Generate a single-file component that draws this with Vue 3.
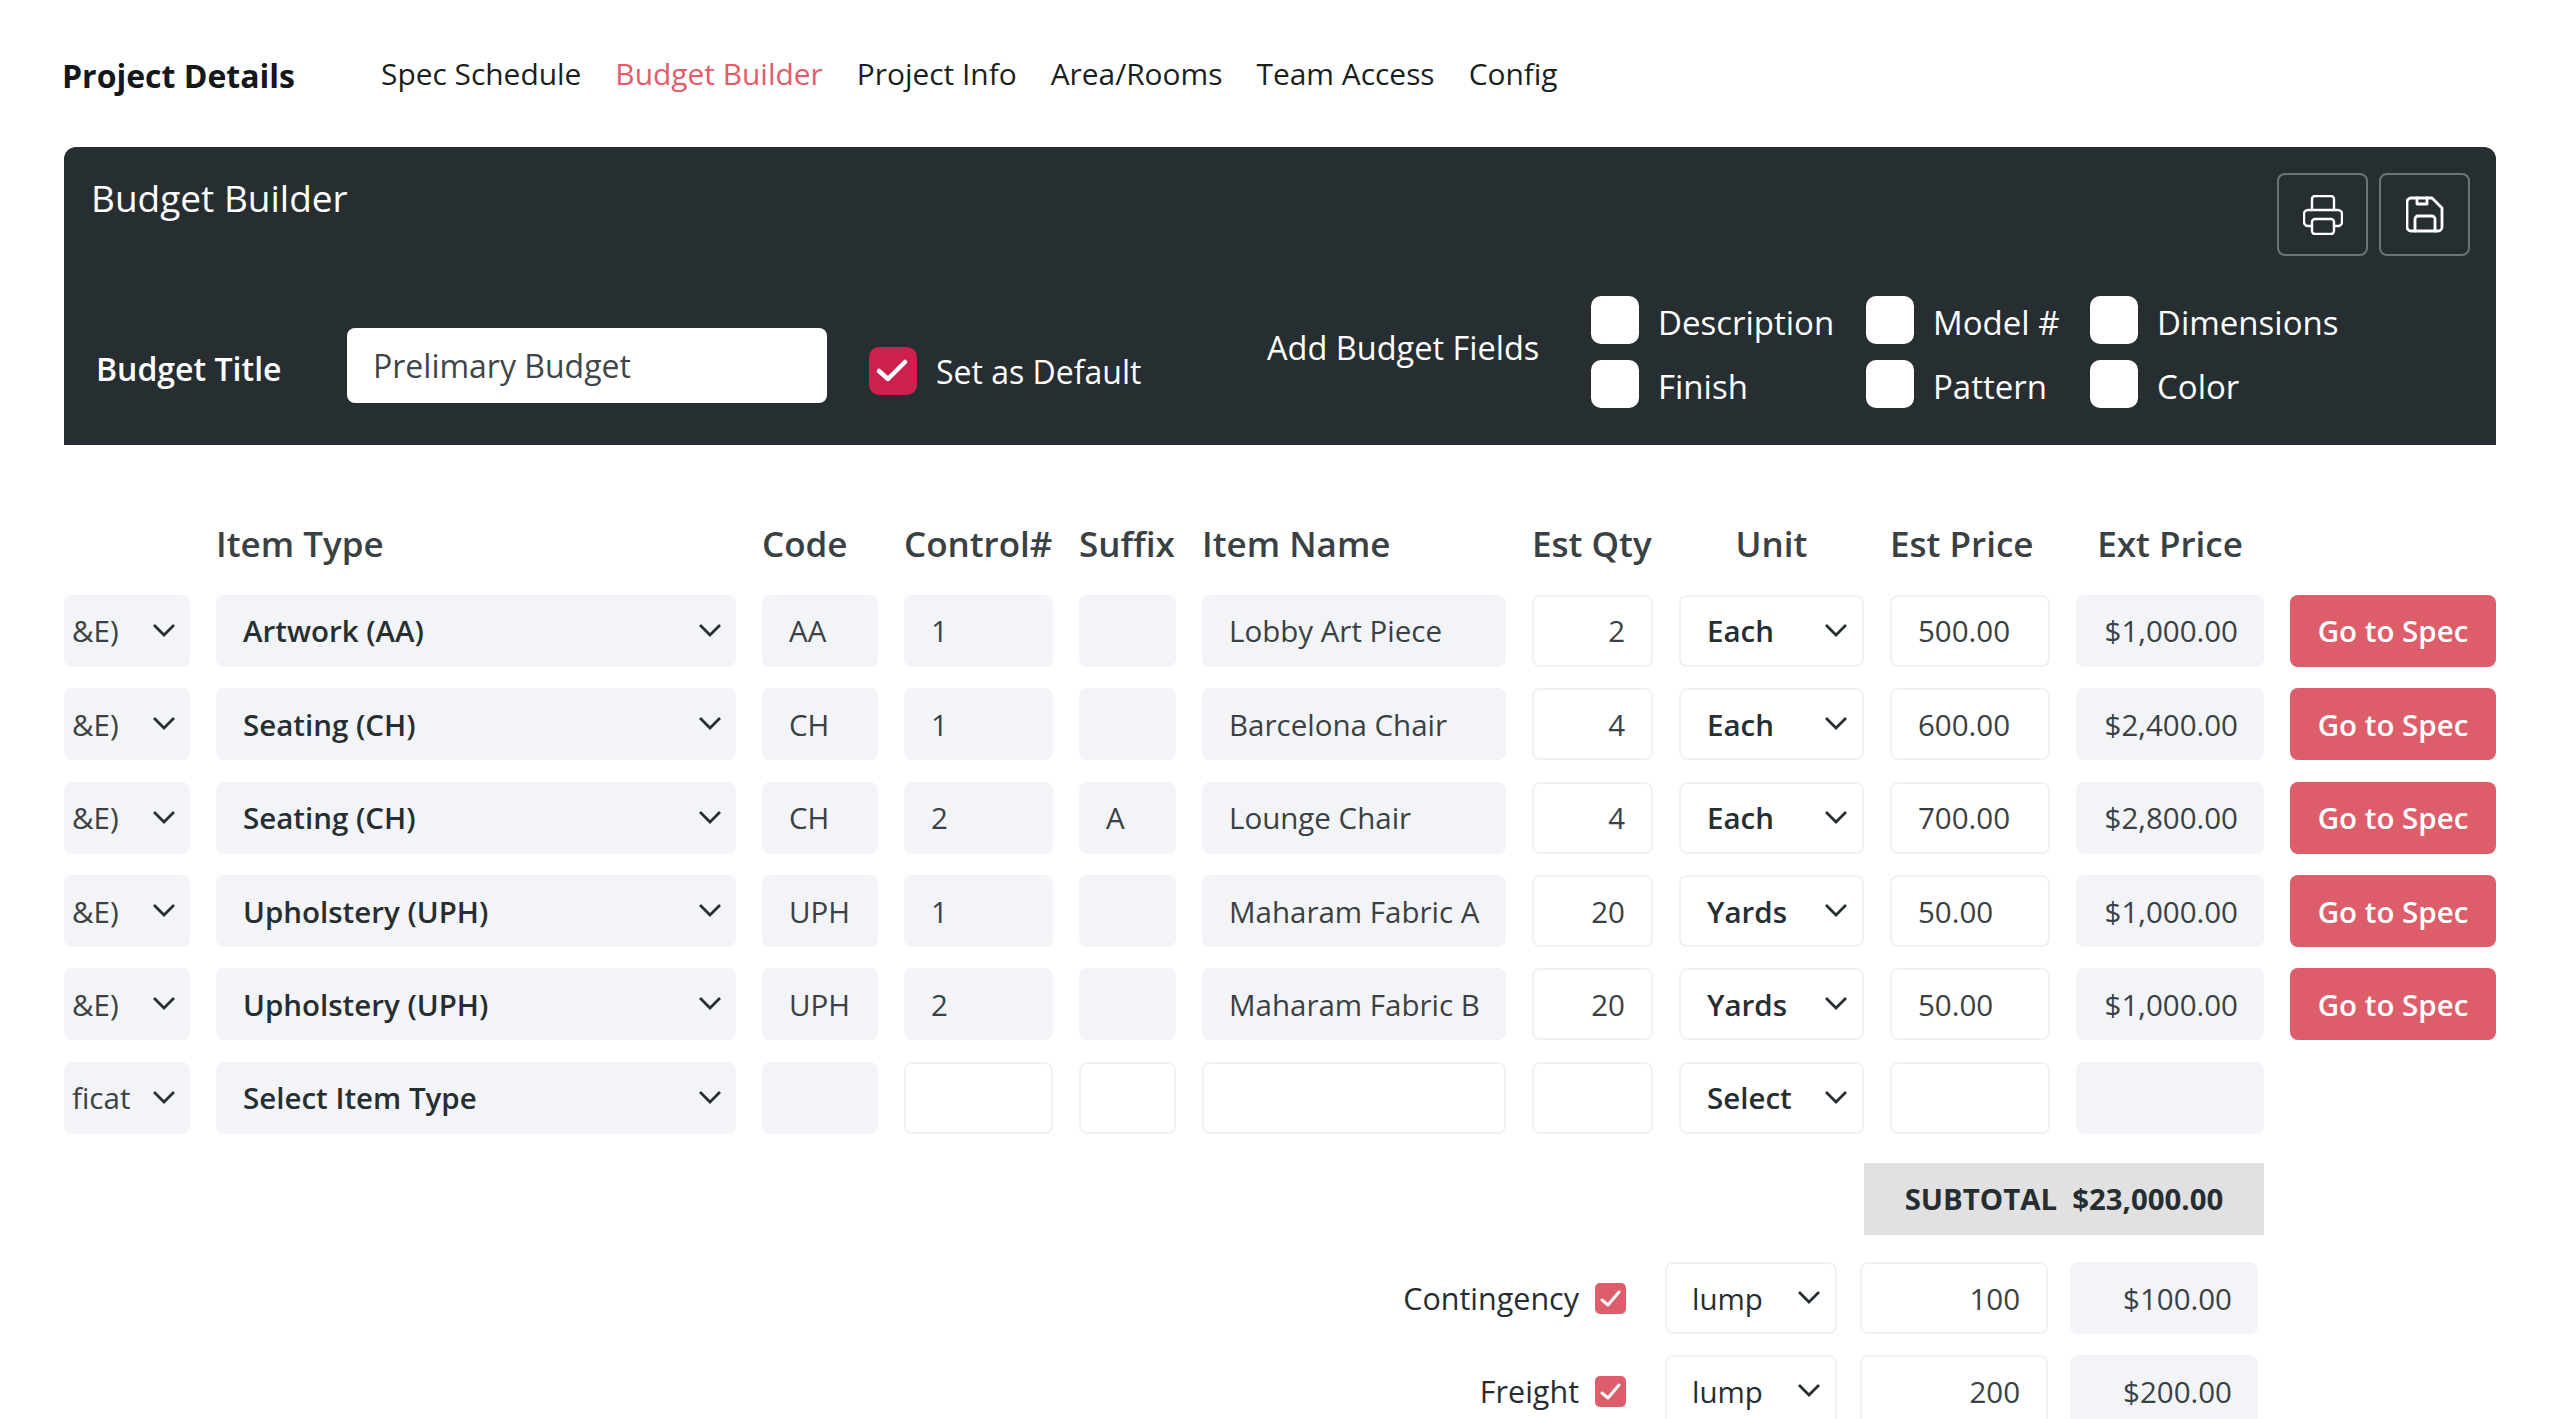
<script setup>
const fieldOptions = ['Description', 'Model #', 'Dimensions', 'Finish', 'Pattern', 'Color']

const rows = [
  { cat: '&E)', type: 'Artwork (AA)', code: 'AA', control: '1', suffix: '', name: 'Lobby Art Piece', qty: '2', unit: 'Each', price: '500.00', ext: '$1,000.00' },
  { cat: '&E)', type: 'Seating (CH)', code: 'CH', control: '1', suffix: '', name: 'Barcelona Chair', qty: '4', unit: 'Each', price: '600.00', ext: '$2,400.00' },
  { cat: '&E)', type: 'Seating (CH)', code: 'CH', control: '2', suffix: 'A', name: 'Lounge Chair', qty: '4', unit: 'Each', price: '700.00', ext: '$2,800.00' },
  { cat: '&E)', type: 'Upholstery (UPH)', code: 'UPH', control: '1', suffix: '', name: 'Maharam Fabric A', qty: '20', unit: 'Yards', price: '50.00', ext: '$1,000.00' },
  { cat: '&E)', type: 'Upholstery (UPH)', code: 'UPH', control: '2', suffix: '', name: 'Maharam Fabric B', qty: '20', unit: 'Yards', price: '50.00', ext: '$1,000.00' }
]

const extras = [
  { label: 'Contingency', amount: '100', total: '$100.00' },
  { label: 'Freight', amount: '200', total: '$200.00' }
]
</script>

<template>
  <div class="page">
    <nav class="topnav">
      <strong class="brand">Project Details</strong>
      <a>Spec Schedule</a>
      <a class="active">Budget Builder</a>
      <a>Project Info</a>
      <a>Area/Rooms</a>
      <a>Team Access</a>
      <a>Config</a>
    </nav>

    <section class="panel">
      <div class="panel-head">
        <h2>Budget Builder</h2>
        <div class="tools">
          <button class="tool">
            <svg width="40" height="40" viewBox="0 0 40 40" fill="none" stroke="currentColor" stroke-width="2.4" stroke-linejoin="round" stroke-linecap="round">
              <path d="M9 31H5a4 4 0 0 1-4-4v-8a4 4 0 0 1 4-4h30a4 4 0 0 1 4 4v8a4 4 0 0 1-4 4h-4" />
              <path d="M9 15V4a3 3 0 0 1 3-3h16a3 3 0 0 1 3 3v11" />
              <rect x="9" y="24" width="22" height="15" rx="3" />
            </svg>
          </button>
          <button class="tool">
            <svg width="38" height="37" viewBox="0 0 38 37" fill="none" stroke="currentColor" stroke-width="2.8" stroke-linejoin="round" stroke-linecap="round">
              <path d="M5 2h21l10 10v19a4 4 0 0 1-4 4H5a4 4 0 0 1-4-4V6a4 4 0 0 1 4-4z" />
              <path d="M11 2v6h10V2" />
              <path d="M9 35V23a3 3 0 0 1 3-3h14a3 3 0 0 1 3 3v12" />
            </svg>
          </button>
        </div>
      </div>
      <div class="panel-form">
        <label class="title-label">Budget Title</label>
        <input class="title-input" value="Prelimary Budget" />
        <span class="check-red">
          <svg width="48" height="48" viewBox="0 0 48 48" fill="none" stroke="#fff" stroke-width="4.5" stroke-linecap="round" stroke-linejoin="round">
            <path d="M10 24l9 8 17-17" />
          </svg>
        </span>
        <span class="default-label">Set as Default</span>
        <span class="add-label">Add Budget Fields</span>
        <div class="fields">
          <label v-for="f in fieldOptions" :key="f" class="field">
            <span class="box"></span>
            <span class="field-text">{{ f }}</span>
          </label>
        </div>
      </div>
    </section>

    <div class="grid head">
      <span></span>
      <span>Item Type</span>
      <span>Code</span>
      <span>Control#</span>
      <span>Suffix</span>
      <span>Item Name</span>
      <span>Est Qty</span>
      <span class="center">Unit</span>
      <span>Est Price</span>
      <span class="center">Ext Price</span>
    </div>

    <div v-for="(r, i) in rows" :key="i" class="grid row">
      <div class="cell select tight">{{ r.cat }}<svg class="chev" viewBox="0 0 24 14"><path d="M2 2l10 10L22 2" /></svg></div>
      <div class="cell select strong">{{ r.type }}<svg class="chev" viewBox="0 0 24 14"><path d="M2 2l10 10L22 2" /></svg></div>
      <div class="cell">{{ r.code }}</div>
      <div class="cell">{{ r.control }}</div>
      <div class="cell">{{ r.suffix }}</div>
      <div class="cell">{{ r.name }}</div>
      <div class="cell white right">{{ r.qty }}</div>
      <div class="cell white select strong">{{ r.unit }}<svg class="chev" viewBox="0 0 24 14"><path d="M2 2l10 10L22 2" /></svg></div>
      <div class="cell white">{{ r.price }}</div>
      <div class="cell right">{{ r.ext }}</div>
      <button class="spec">Go to Spec</button>
    </div>

    <div class="grid row">
      <div class="cell select tight">ficat<svg class="chev" viewBox="0 0 24 14"><path d="M2 2l10 10L22 2" /></svg></div>
      <div class="cell select strong">Select Item Type<svg class="chev" viewBox="0 0 24 14"><path d="M2 2l10 10L22 2" /></svg></div>
      <div class="cell"></div>
      <div class="cell white"></div>
      <div class="cell white"></div>
      <div class="cell white"></div>
      <div class="cell white"></div>
      <div class="cell white select strong">Select<svg class="chev" viewBox="0 0 24 14"><path d="M2 2l10 10L22 2" /></svg></div>
      <div class="cell white"></div>
      <div class="cell"></div>
    </div>

    <div class="subtotal-wrap">
      <div class="subtotal"><span>SUBTOTAL</span><span>$23,000.00</span></div>
    </div>

    <div class="extras">
      <div v-for="x in extras" :key="x.label" class="extra">
        <span class="extra-label">{{ x.label }}</span>
        <span class="check-small">
          <svg width="31" height="31" viewBox="0 0 31 31" fill="none" stroke="#fff" stroke-width="3" stroke-linecap="round" stroke-linejoin="round">
            <path d="M7 17l6 5L24 9" />
          </svg>
        </span>
        <div class="cell white select medium lump">lump<svg class="chev" viewBox="0 0 24 14"><path d="M2 2l10 10L22 2" /></svg></div>
        <div class="cell white right amount">{{ x.amount }}</div>
        <div class="cell right total">{{ x.total }}</div>
      </div>
    </div>
  </div>
</template>

<style>
body {
  margin: 0;
  background: #fff;
}
</style>

<style scoped>
.page {
  height: 1419px;
  overflow: hidden;
  box-sizing: border-box;
  padding: 0 64px;
  font-family: "Open Sans", "Liberation Sans", sans-serif;
  color: #272e31;
}

/* top nav */
.topnav {
  display: flex;
  align-items: center;
  height: 147px;
  font-size: 29.9px;
  color: #1a1f21;
}

.topnav a {
  margin-right: 34px;
}

.topnav a.active {
  color: #e25c6a;
}

.brand {
  margin: 4px 86px 0 -2px;
  font-size: 32px;
  font-weight: 700;
  color: #14181a;
}

/* dark panel */
.panel {
  height: 298px;
  box-sizing: border-box;
  background: #272e31;
  border-radius: 12px 12px 0 0;
  color: #fff;
  padding: 26px 26px 0 27px;
}

.panel-head {
  display: flex;
  justify-content: space-between;
  height: 110px;
}

.panel-head h2 {
  margin: 0;
  font-size: 37px;
  font-weight: 400;
  line-height: 50px;
}

.tools {
  display: flex;
  gap: 11px;
  align-self: flex-start;
}

.tool {
  width: 91px;
  height: 83px;
  box-sizing: border-box;
  display: flex;
  align-items: center;
  justify-content: center;
  background: transparent;
  border: 2px solid #6d7376;
  border-radius: 8px;
  color: #fff;
  padding: 0;
}

.panel-form {
  display: flex;
  align-items: flex-start;
  line-height: 48px;
}

.title-label {
  margin: 62px 0 0 5px;
  width: 251px;
  font-size: 32px;
  font-weight: 600;
}

.title-input {
  margin-top: 45px;
  width: 480px;
  height: 75px;
  box-sizing: border-box;
  border: 0;
  border-radius: 8px;
  padding: 0 26px;
  font: 400 32px "Open Sans", sans-serif;
  color: #3f4649;
  outline: none;
}

.check-red {
  margin: 64px 0 0 42px;
  width: 48px;
  height: 48px;
  background: #cf1f4d;
  border-radius: 10px;
}

.check-red svg {
  display: block;
}

.default-label {
  margin: 65px 0 0 19px;
  width: 331px;
  font-size: 32px;
}

.add-label {
  margin-top: 41px;
  width: 324px;
  font-size: 32.5px;
}

.fields {
  margin-top: 13px;
  display: grid;
  grid-template-columns: 275px 224px auto;
  row-gap: 16px;
  font-size: 33px;
}

.field {
  height: 48px;
  display: flex;
  align-items: center;
  gap: 19px;
}

.field-text {
  margin-top: 6px;
}

.box {
  width: 48px;
  height: 48px;
  background: #fff;
  border-radius: 10px;
}

/* table */
.grid {
  display: grid;
  grid-template-columns: 126px 520px 116px 149px 97px 304px 121px 185px 160px 188px 206px;
  column-gap: 26px;
}

.head {
  margin-top: 68px;
  height: 60.5px;
  align-items: center;
  font-size: 35px;
  font-weight: 600;
  color: #3a4144;
}

.center {
  text-align: center;
}

.row {
  margin-top: 21.4px;
  height: 72px;
}

.cell {
  height: 72px;
  box-sizing: border-box;
  display: flex;
  align-items: center;
  padding: 0 26px 0 27px;
  background: #f3f4f7;
  border-radius: 8px;
  font-size: 29.5px;
  color: #3a4144;
  white-space: nowrap;
  overflow: hidden;
}

.cell.white {
  background: #fff;
  border: 2px solid #f1f2f3;
  padding-left: 26px;
}

.cell.right {
  justify-content: flex-end;
}

.select {
  justify-content: space-between;
  padding-right: 8px;
}

.select.tight {
  padding-left: 8px;
}

.select.strong {
  font-weight: 600;
  color: #272e31;
}

.cell.select.medium {
  font-weight: 500;
  color: #272e31;
  padding-left: 25px;
}

.chev {
  width: 24px;
  height: 14px;
  fill: none;
  stroke: #272e31;
  stroke-width: 2.8;
  flex: none;
  margin: -2px 6px 0 0;
}

.spec {
  height: 72px;
  background: #dd5e6a;
  border: 0;
  border-radius: 8px;
  color: #fff;
  font: 600 29.5px "Open Sans", sans-serif;
}

.subtotal-wrap {
  display: flex;
  justify-content: flex-end;
  margin: 29.5px 232px 0 0;
}

.subtotal {
  width: 400px;
  height: 72px;
  background: #e1e1e1;
  display: flex;
  align-items: center;
  justify-content: center;
  gap: 15px;
  font-size: 29.4px;
  font-weight: 700;
}

.extras {
  margin: 27px 238px 0 0;
  display: grid;
  row-gap: 21px;
}

.extra {
  display: flex;
  align-items: center;
  justify-content: flex-end;
  height: 72px;
}

.extra-label {
  font-size: 30.5px;
  font-weight: 500;
}

.check-small {
  margin-left: 16px;
  width: 31px;
  height: 31px;
  background: #dd5e6a;
  border-radius: 5px;
}

.check-small svg {
  display: block;
}

.lump {
  margin-left: 39px;
  width: 172px;
}

.amount {
  margin-left: 23px;
  width: 188px;
}

.total {
  margin-left: 22px;
  width: 188px;
}
</style>
